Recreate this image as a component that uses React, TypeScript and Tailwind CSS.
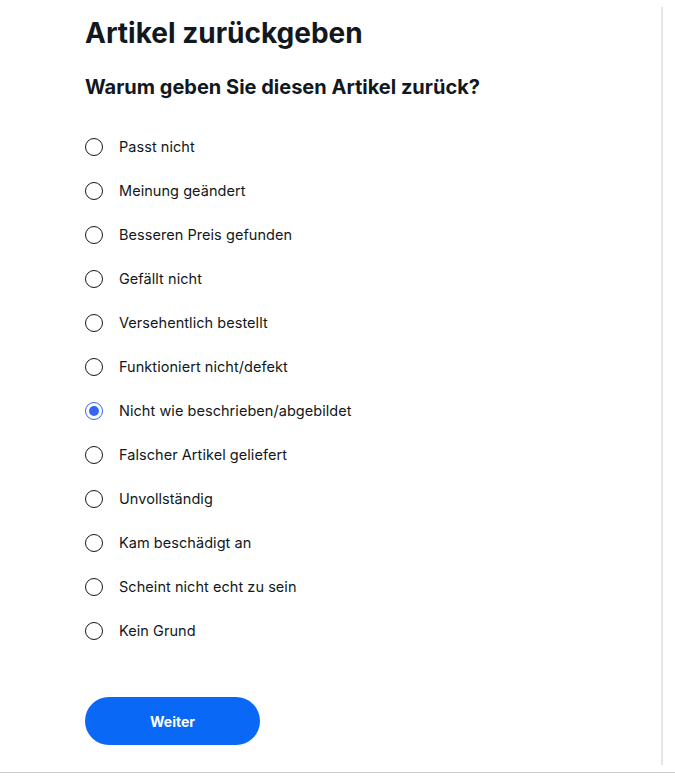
import React, { useState } from "react";

const reasons = [
  "Passt nicht",
  "Meinung geändert",
  "Besseren Preis gefunden",
  "Gefällt nicht",
  "Versehentlich bestellt",
  "Funktioniert nicht/defekt",
  "Nicht wie beschrieben/abgebildet",
  "Falscher Artikel geliefert",
  "Unvollständig",
  "Kam beschädigt an",
  "Scheint nicht echt zu sein",
  "Kein Grund",
];

export default function App() {
  const [sel, setSel] = useState(6);
  return (
    <div
      className="w-[675px] h-[781px] bg-white flex flex-col text-[#111820]"
      style={{ fontFamily: "Inter, 'Open Sans', Arial, sans-serif" }}
    >
      <div className="h-[773px] flex border-b border-[#cccccc]">
        <div className="flex-1 pl-[85px] pt-[15px]">
          <h1 className="text-[28px] leading-[36px] font-bold">
            Artikel zurückgeben
          </h1>
          <h2 className="mt-[22px] text-[20px] leading-[28px] font-bold">
            Warum geben Sie diesen Artikel zurück?
          </h2>
          <div className="mt-[24px] flex flex-col">
            {reasons.map((r, i) => (
              <label
                key={r}
                className="h-[44px] flex items-center cursor-pointer"
                onClick={() => setSel(i)}
              >
                <span
                  className={
                    "w-[18px] h-[18px] rounded-full flex items-center justify-center " +
                    (sel === i
                      ? "border-[1.5px] border-[#3665f3]"
                      : "border-[1.5px] border-[#191919]")
                  }
                >
                  {sel === i && (
                    <span className="w-[10px] h-[10px] rounded-full bg-[#3665f3]" />
                  )}
                </span>
                <span className="ml-[16px] text-[14.5px] leading-[20px] tracking-[0.05px] text-[#111820]">
                  {r}
                </span>
              </label>
            ))}
          </div>
          <button className="mt-[44px] w-[175px] h-[48px] rounded-full bg-[#0968f6] text-white text-[14px] font-bold">
            Weiter
          </button>
        </div>
        <div className="w-[2px] my-[7px] bg-[#e5e5e5]" />
        <div className="w-[12px]" />
      </div>
    </div>
  );
}
